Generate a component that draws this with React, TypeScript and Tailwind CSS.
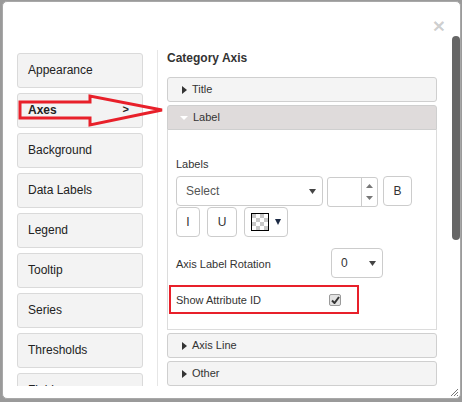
import React from "react";

const navItems = ["Appearance", "Axes", "Background", "Data Labels", "Legend", "Tooltip", "Series", "Thresholds", "Fields"];

function RightTri() {
  return (
    <svg width="5" height="8" viewBox="0 0 5 8" className="mr-[5px]">
      <polygon points="0,0 5,4 0,8" fill="#333" />
    </svg>
  );
}

function DownArrow({ color = "#444", w = 7, h = 5 }: { color?: string; w?: number; h?: number }) {
  return (
    <svg width={w} height={h} viewBox={`0 0 ${w} ${h}`}>
      <polygon points={`0,0 ${w},0 ${w / 2},${h}`} fill={color} />
    </svg>
  );
}

function Checker() {
  const cells = [];
  for (let r = 0; r < 4; r++) {
    for (let c = 0; c < 4; c++) {
      cells.push(<div key={`${r}-${c}`} className={(r + c) % 2 === 0 ? "bg-[#c8c8c8]" : "bg-white"} />);
    }
  }
  return <div className="grid grid-cols-4 grid-rows-4 w-[18px] h-[18px] border border-black">{cells}</div>;
}

export default function App() {
  return (
    <div className="relative w-[462px] h-[402px] bg-[#9a9a9a] pl-[2px] pt-[1px] pr-[1px] pb-[3px] font-['Liberation_Sans',Arial,sans-serif] text-[#333] overflow-hidden">
      <div className="relative flex h-full w-full bg-white border border-[#a8a8a8] rounded-[5px]">
        <div className="flex flex-col flex-1 min-w-0 pb-[12px]">
          <div className="h-[48px] flex justify-end pr-[7px] pt-[13px]">
            <span className="text-[21px] font-bold leading-none text-black/20">×</span>
          </div>
          <div className="flex flex-1 min-h-0 overflow-hidden">
            <div className="flex flex-col gap-[5px] pl-[14px] pt-[3px] w-[140px] shrink-0">
              {navItems.map((n) => (
                <div
                  key={n}
                  className="h-[35px] shrink-0 flex items-center justify-between pl-[10px] pr-[13px] pb-[2px] bg-[#f3f3f3] border border-[#dadada] rounded-[3px] text-[12px] text-[#222]"
                >
                  <span className={n === "Axes" ? "font-bold" : ""}>{n}</span>
                  {n === "Axes" && <span className="font-bold text-[11px]">&gt;</span>}
                </div>
              ))}
            </div>
            <div className="w-[1px] bg-[#e6e6e6] ml-[14px] shrink-0" />
            <div className="flex flex-col ml-[9px] w-[270px] shrink-0">
              <div className="text-[12px] font-bold leading-[16px] text-[#333]">Category Axis</div>
              <div className="mt-[11px] h-[25px] shrink-0 flex items-center pl-[14px] bg-[#f4f4f4] border border-[#cfcfcf] rounded-[3px] text-[11px]">
                <RightTri />
                <span>Title</span>
              </div>
              <div className="mt-[3px] h-[25px] shrink-0 flex items-center pl-[12px] bg-[#dfdbdb] border border-[#cfcfcf] rounded-t-[3px] text-[11px]">
                <span className="mr-[5px] flex"><DownArrow color="#fff" w={8} h={4} /></span>
                <span>Label</span>
              </div>
              <div className="h-[200px] shrink-0 border-x border-b border-[#dcdcdc] pl-[8px] pt-[28px] flex flex-col">
                <div className="text-[11px] leading-[13px]">Labels</div>
                <div className="flex mt-[5px] h-[30px]">
                  <div className="w-[147px] h-[30px] border border-[#ccc] rounded-[4px] flex items-center justify-between pl-[9px] pr-[6px] text-[12px] text-[#555]">
                    <span>Select</span>
                    <DownArrow />
                  </div>
                  <div className="ml-[4px] mt-[1px] w-[51px] h-[30px] border border-[#ccc] rounded-[3px] flex">
                    <div className="flex-1" />
                    <div className="w-[16px] border-l border-[#ccc] flex flex-col items-center justify-center gap-[8px]">
                      <svg width="7" height="4" viewBox="0 0 7 4"><polygon points="0,4 7,4 3.5,0" fill="#777" /></svg>
                      <svg width="7" height="4" viewBox="0 0 7 4"><polygon points="0,0 7,0 3.5,4" fill="#777" /></svg>
                    </div>
                  </div>
                  <div className="ml-[5px] w-[29px] h-[30px] border border-[#ccc] rounded-[4px] flex items-center justify-center text-[12px]">B</div>
                </div>
                <div className="flex mt-[1px] h-[30px]">
                  <div className="w-[24px] h-[30px] border border-[#ccc] rounded-[4px] flex items-center justify-center text-[12px]">I</div>
                  <div className="ml-[7px] w-[30px] h-[30px] border border-[#ccc] rounded-[4px] flex items-center justify-center text-[12px]">U</div>
                  <div className="ml-[7px] w-[44px] h-[30px] border border-[#ccc] rounded-[4px] flex items-center pl-[6px] gap-[6px]">
                    <Checker />
                    <DownArrow color="#1c2a44" w={6} h={6} />
                  </div>
                </div>
                <div className="flex items-center mt-[11px] h-[30px]">
                  <div className="w-[155px] text-[11px] pt-[2px]">Axis Label Rotation</div>
                  <div className="w-[52px] h-[30px] border border-[#ccc] rounded-[4px] flex items-center justify-between pl-[9px] pr-[6px] text-[12px]">
                    <span>0</span>
                    <DownArrow />
                  </div>
                </div>
                <div className="mt-[7px] ml-[-7px] w-[190px] h-[29px] border-2 border-[#e8202a] flex items-center pl-[5px]">
                  <div className="w-[153px] text-[11px] pt-[1px]">Show Attribute ID</div>
                  <div className="w-[12px] h-[12px] bg-[#e2e2e2] border border-[#9a9a9a] rounded-[2px] flex items-center justify-center">
                    <svg width="9" height="8" viewBox="0 0 9 8">
                      <path d="M1 4.5 L3.5 7 L8 1" stroke="#333" strokeWidth="2" fill="none" />
                    </svg>
                  </div>
                </div>
              </div>
              <div className="mt-[3px] h-[25px] shrink-0 flex items-center pl-[14px] bg-[#f4f4f4] border border-[#cfcfcf] rounded-[3px] text-[11px]">
                <RightTri />
                <span>Axis Line</span>
              </div>
              <div className="mt-[3px] h-[25px] shrink-0 flex items-center pl-[14px] bg-[#f4f4f4] border border-[#cfcfcf] rounded-[3px] text-[11px]">
                <RightTri />
                <span>Other</span>
              </div>
            </div>
          </div>
        </div>
        <div className="w-[8px] shrink-0 pt-[34px]">
          <div className="h-[204px] bg-[#666] rounded-[4px]" />
        </div>
        <svg className="absolute right-[2px] bottom-[2px]" width="8" height="8" viewBox="0 0 8 8">
          <path d="M1 8 L8 1 M4 8 L8 4 M7 8 L8 7" stroke="#777" strokeWidth="1" />
        </svg>
      </div>
      <svg className="absolute left-0 top-0 pointer-events-none" width="462" height="402" viewBox="0 0 462 402">
        <polygon points="20,102 90,102 90,96 162,110 90,125 90,118 20,118" fill="none" stroke="#e8202a" strokeWidth="3" />
      </svg>
    </div>
  );
}
